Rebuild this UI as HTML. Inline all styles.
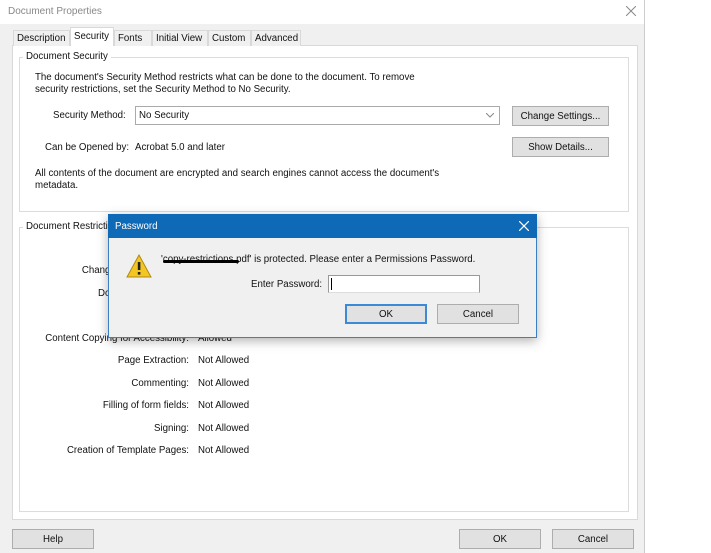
<!DOCTYPE html>
<html><head><style>
body{margin:0;width:711px;height:553px;background:#fff;font-family:"Liberation Sans",sans-serif;font-size:9.7px;color:#111;position:relative;overflow:hidden}
.a{position:absolute}
.win{left:0;top:0;width:644px;height:553px;background:#f0f0f0;border-right:1px solid #ccc}
.btn{position:absolute;background:#e1e1e1;border:1px solid #adadad;text-align:center;box-sizing:border-box}
.grp{position:absolute;border:1px solid #dcdcdc;background:#fff}
.lg{position:absolute;background:#fff;padding:0 3px}
.tab{position:absolute;top:30px;height:16px;line-height:15px;border:1px solid #d9d9d9;border-bottom:none;background:#f0f0f0;padding:0 3px;box-sizing:border-box}
.r{position:absolute;text-align:right;width:189px;left:0}
.v{position:absolute;left:198px}
</style></head><body>
<div class="a win"></div>
<div class="a" style="left:0;top:0;width:644px;height:24px;background:#fff"></div>
<div class="a" style="left:8px;top:6px;color:#888;font-size:10px">Document Properties</div>
<svg class="a" style="left:626px;top:6px" width="10" height="10"><path d="M0 0L10 10M10 0L0 10" stroke="#888" stroke-width="1"/></svg>
<div class="a" style="left:12px;top:45px;width:624px;height:473px;background:#fff;border:1px solid #d9d9d9"></div>
<div class="tab" style="left:13px;width:57px">Description</div>
<div class="tab" style="left:70px;top:27px;height:19px;width:44px;background:#fff;line-height:17px">Security</div>
<div class="tab" style="left:114px;width:38px">Fonts</div>
<div class="tab" style="left:152px;width:56px">Initial View</div>
<div class="tab" style="left:208px;width:43px">Custom</div>
<div class="tab" style="left:251px;width:50px">Advanced</div>

<div class="grp" style="left:19px;top:57px;width:608px;height:153px"></div>
<div class="lg" style="left:23px;top:51px">Document Security</div>
<div class="a" style="left:35px;top:72px;line-height:12px">The document's Security Method restricts what can be done to the document. To remove<br>security restrictions, set the Security Method to No Security.</div>
<div class="a" style="left:53px;top:110px">Security Method:</div>
<div class="a" style="left:135px;top:106px;width:365px;height:19px;border:1px solid #aaa;box-sizing:border-box;padding:3px 3px;background:#fff">No Security<svg style="position:absolute;right:5px;top:6px" width="8" height="5"><path d="M0 0L4 4L8 0" stroke="#888" fill="none"/></svg></div>
<div class="btn" style="left:512px;top:106px;width:97px;height:20px;line-height:19px">Change Settings...</div>
<div class="a" style="left:45px;top:142px">Can be Opened by:</div>
<div class="a" style="left:135px;top:142px">Acrobat 5.0 and later</div>
<div class="btn" style="left:512px;top:137px;width:97px;height:20px;line-height:19px">Show Details...</div>
<div class="a" style="left:35px;top:168px;line-height:12px">All contents of the document are encrypted and search engines cannot access the document's<br>metadata.</div>

<div class="grp" style="left:19px;top:227px;width:608px;height:283px"></div>
<div class="lg" style="left:23px;top:221px">Document Restrictions Summary</div>
<div class="r" style="top:265px">Changing the Document:</div>
<div class="r" style="top:288px">Document Assembly:</div>
<div class="r" style="top:333px">Content Copying for Accessibility:</div><div class="v" style="top:333px">Allowed</div>
<div class="r" style="top:355px">Page Extraction:</div><div class="v" style="top:355px">Not Allowed</div>
<div class="r" style="top:378px">Commenting:</div><div class="v" style="top:378px">Not Allowed</div>
<div class="r" style="top:400px">Filling of form fields:</div><div class="v" style="top:400px">Not Allowed</div>
<div class="r" style="top:423px">Signing:</div><div class="v" style="top:423px">Not Allowed</div>
<div class="r" style="top:445px">Creation of Template Pages:</div><div class="v" style="top:445px">Not Allowed</div>

<div class="btn" style="left:12px;top:529px;width:82px;height:20px;line-height:20px">Help</div>
<div class="btn" style="left:459px;top:529px;width:82px;height:20px;line-height:20px">OK</div>
<div class="btn" style="left:552px;top:529px;width:82px;height:20px;line-height:20px">Cancel</div>

<div class="a" style="left:108px;top:214px;width:429px;height:124px;background:#f0f0f0;border:1px solid #3b7fc4;box-sizing:border-box;box-shadow:0 3px 10px rgba(0,0,0,.3)"></div>
<div class="a" style="left:108px;top:214px;width:429px;height:24px;background:#0e69b6"></div>
<div class="a" style="left:115px;top:221px;color:#fff">Password</div>
<svg class="a" style="left:519px;top:221px" width="10" height="10"><path d="M0 0L10 10M10 0L0 10" stroke="#fff" stroke-width="1.2"/></svg>
<svg class="a" style="left:126px;top:254px" width="26" height="24" viewBox="0 0 26 24"><path d="M13 1 L25 23 L1 23 Z" fill="#f3c623" stroke="#b08a10"/><rect x="11.8" y="8" width="2.6" height="8" fill="#222"/><rect x="11.8" y="18" width="2.6" height="2.6" fill="#222"/></svg>
<div class="a" style="left:161px;top:254px">'copy-restrictions.pdf' is protected. Please enter a Permissions Password.</div>
<div class="a" style="left:163px;top:260px;width:76px;height:3px;background:#000;border-radius:2px"></div>
<div class="a" style="left:251px;top:279px">Enter Password:</div>
<div class="a" style="left:328px;top:275px;width:152px;height:18px;background:#fff;border:1px solid #999;border-bottom-color:#ddd;box-sizing:border-box"><div style="position:absolute;left:2px;top:2px;width:1px;height:12px;background:#000"></div></div>
<div class="btn" style="left:345px;top:304px;width:82px;height:20px;line-height:17px;border:2px solid #3c8ad6">OK</div>
<div class="btn" style="left:437px;top:304px;width:82px;height:20px;line-height:19px">Cancel</div>
</body></html>
